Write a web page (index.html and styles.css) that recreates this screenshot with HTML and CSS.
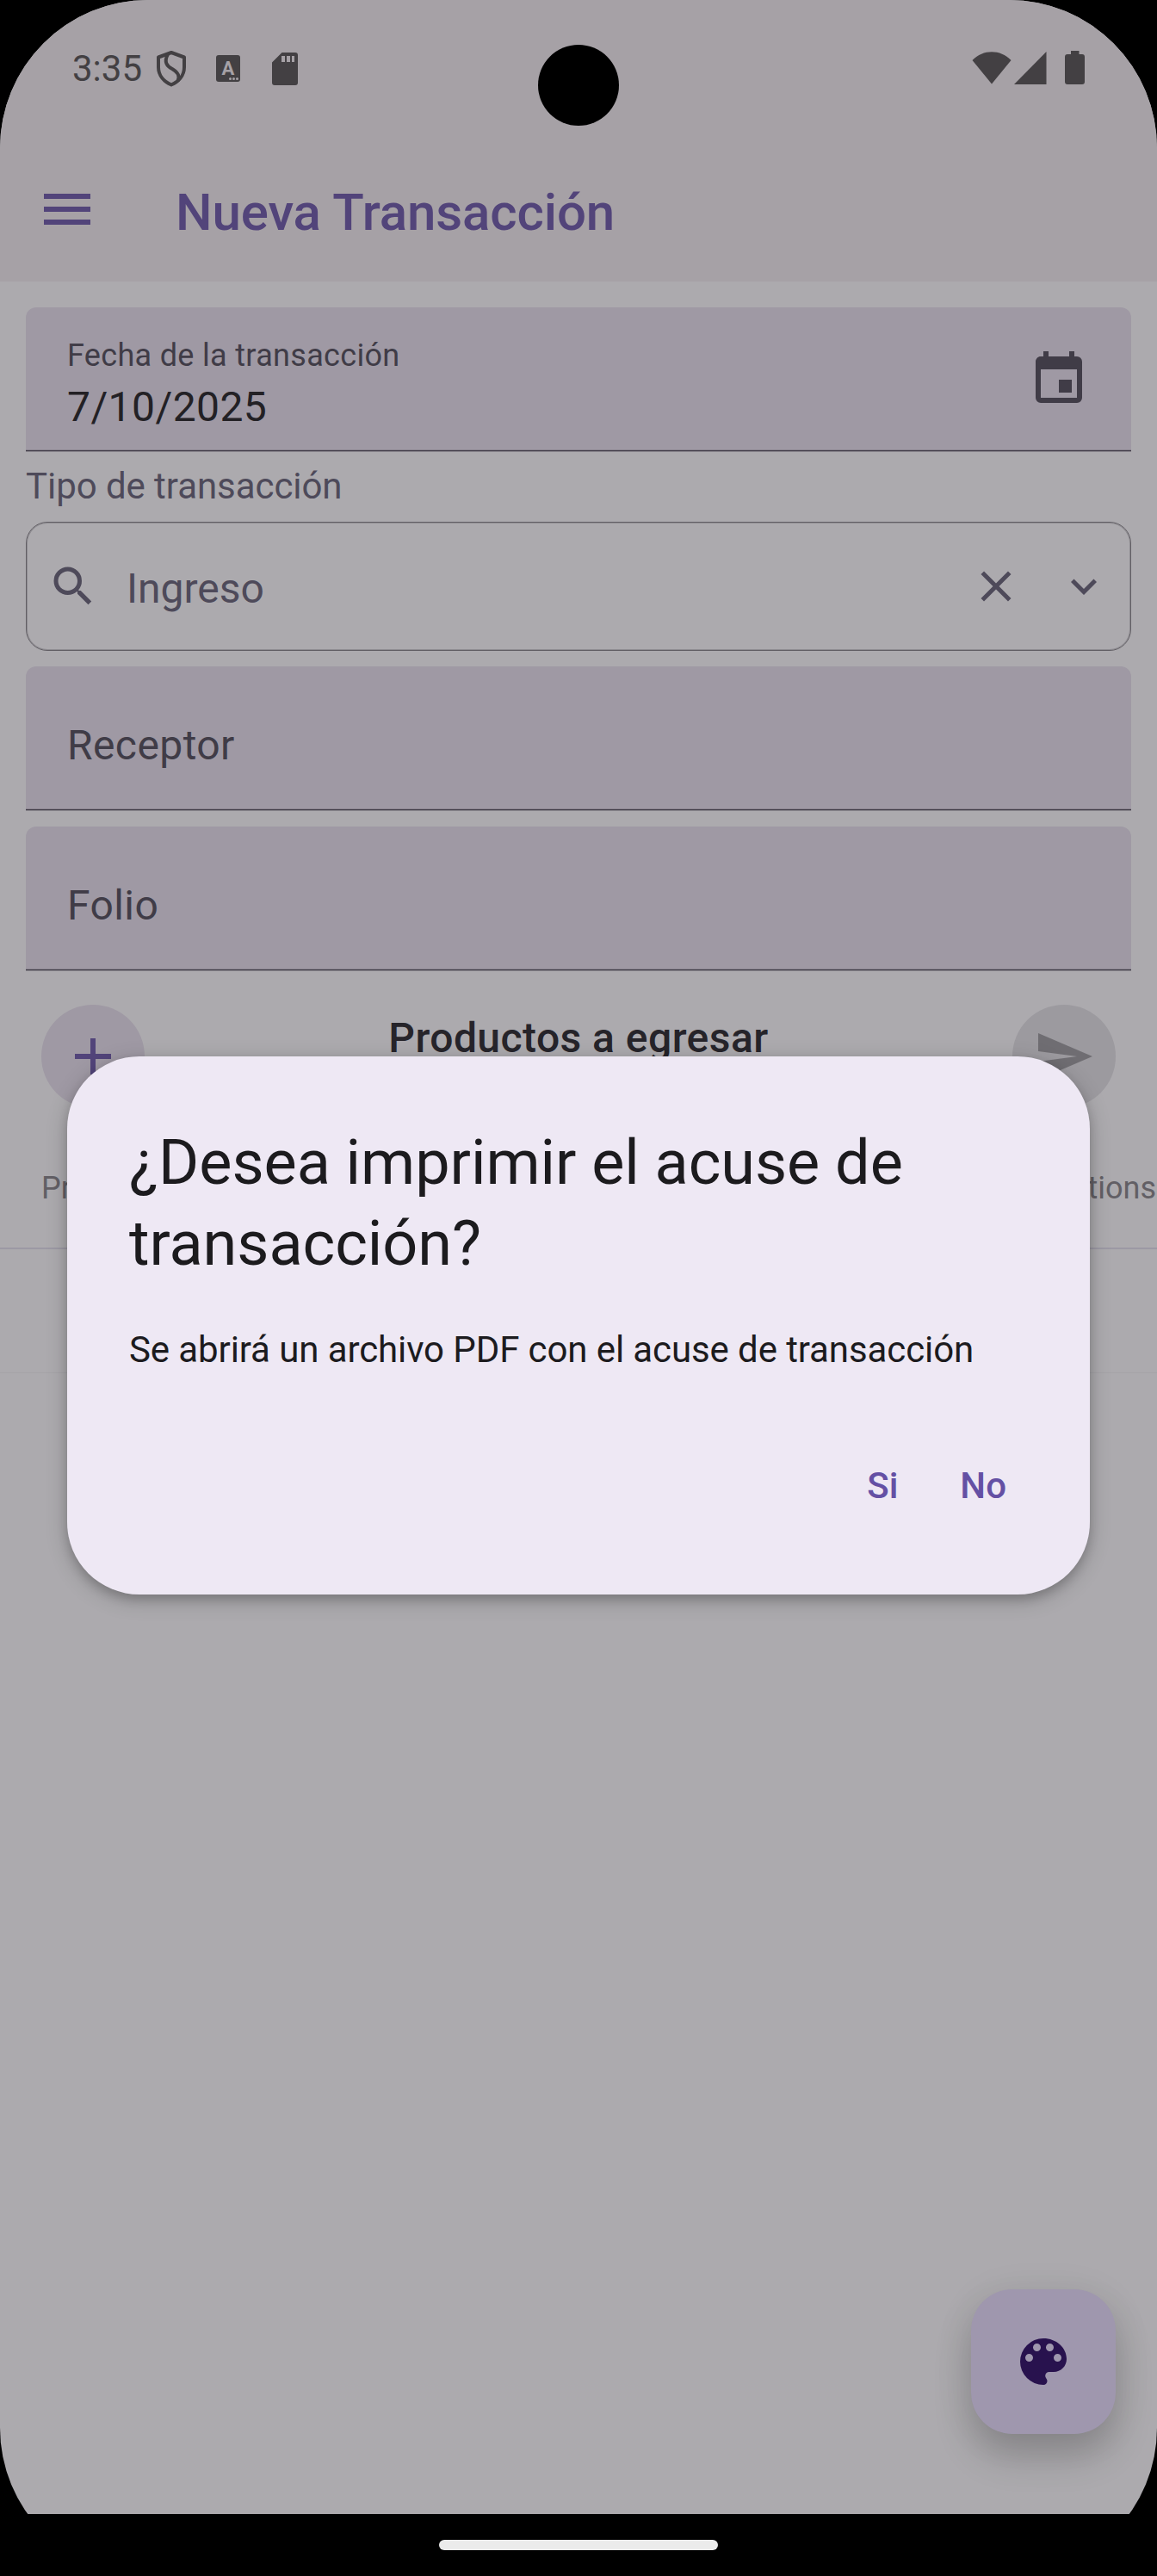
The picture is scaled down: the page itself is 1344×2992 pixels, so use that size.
FILE: index.html
```html
<!DOCTYPE html>
<html lang="es">
<head>
<meta charset="utf-8">
<title>Nueva Transacción</title>
<link rel="stylesheet" href="styles.css">
</head>
<body>
<div class="screen">
  <header class="top">
    <div class="status">
      <span class="clock">3:35</span>
      <svg class="shield" width="34" height="42" viewBox="0 0 34 42"><path d="M17 2 32 7.500V19C32 29 25 36 17 39.500C9 36 2 29 2 19V7.500Z" fill="none" stroke="currentColor" stroke-width="4" stroke-linejoin="round"/><path d="M13 4C8 13 12 18 18 21C25 25 27 29 24.500 35" fill="none" stroke="currentColor" stroke-width="4"/></svg>
      <span class="badge-a"><b>A</b><i></i><i></i><i></i></span>
      <svg class="sd" width="30" height="38" viewBox="0 0 30 38"><path fill-rule="evenodd" d="M11.500 0H27a3 3 0 0 1 3 3V35a3 3 0 0 1-3 3H3a3 3 0 0 1-3-3V11.500ZM11 4v7h4V4Zm6 0v7h4V4Zm6 0v7h3V4Z" fill="currentColor"/></svg>
      <span class="spacer"></span>
      <svg class="wifi" width="46" height="38" viewBox="0 0 46 38"><path d="M0.500 10C13-3 33-3 45.500 10L23 37.500Z" fill="currentColor"/></svg>
      <svg class="signal" width="38" height="38" viewBox="0 0 38 38"><path d="M37.500 0V38H0Z" fill="currentColor"/></svg>
      <svg class="battery" width="23" height="39" viewBox="0 0 23 39"><path d="M7 0H16.500V4H20a3 3 0 0 1 3 3V36a3 3 0 0 1-3 3H3a3 3 0 0 1-3-3V7a3 3 0 0 1 3-3H7Z" fill="currentColor"/></svg>
      <span class="camera"></span>
    </div>
    <div class="appbar">
      <svg width="72" height="72" viewBox="0 0 24 24"><path d="M3 6h18v2H3zM3 11h18v2H3zM3 16h18v2H3z" fill="currentColor"/></svg>
      <h1>Nueva Transacción</h1>
    </div>
  </header>

  <main class="form">
    <div class="field date">
      <div class="field-text">
        <span class="label">Fecha de la transacción</span>
        <span class="value">7/10/2025</span>
      </div>
      <svg width="72" height="72" viewBox="0 0 24 24"><path d="M19 19H5V8h14M16 1v2H8V1H6v2H5C3.890 3 3 3.890 3 5v14a2 2 0 0 0 2 2h14a2 2 0 0 0 2-2V5a2 2 0 0 0-2-2h-1V1M17 12h-5v5h5z" fill="currentColor"/></svg>
    </div>
    <div class="caption">Tipo de transacción</div>
    <div class="select">
      <svg width="60" height="60" viewBox="0 0 24 24"><path d="M15.500 14h-.79l-.28-.27A6.471 6.471 0 0 0 16 9.500 6.500 6.500 0 1 0 9.500 16c1.610 0 3.090-.59 4.230-1.570l.27.28v.79l5 4.990L20.490 19l-4.990-5zm-6 0C7.010 14 5 11.990 5 9.500S7.010 5 9.500 5 14 7.010 14 9.500 11.990 14 9.500 14z" fill="currentColor"/></svg>
      <span class="select-value">Ingreso</span>
      <svg width="60" height="60" viewBox="0 0 24 24"><path d="M19 6.410 17.590 5 12 10.590 6.410 5 5 6.410 10.590 12 5 17.590 6.410 19 12 13.410 17.590 19 19 17.590 13.410 12z" fill="currentColor"/></svg>
      <svg class="chevron" width="60" height="60" viewBox="0 0 24 24"><path d="M16.590 8.590 12 13.170 7.410 8.590 6 10l6 6 6-6z" fill="currentColor"/></svg>
    </div>
    <div class="field"><span class="placeholder">Receptor</span></div>
    <div class="field"><span class="placeholder">Folio</span></div>
  </main>

  <section class="products">
    <div class="actions">
      <span class="round add"><svg width="72" height="72" viewBox="0 0 24 24"><path d="M19 13h-6v6h-2v-6H5v-2h6V5h2v6h6z" fill="currentColor"/></svg></span>
      <h2>Productos a egresar</h2>
      <span class="round send"><svg width="72" height="72" viewBox="0 0 24 24"><path d="M2 21 23 12 2 3v7l15 2-15 2z" fill="currentColor"/></svg></span>
    </div>
    <div class="table-head"><span>Prod.</span><span>Actions</span></div>
    <div class="table-foot"></div>
  </section>

  <button class="fab" aria-label="Tema"><svg width="72" height="72" viewBox="0 0 24 24"><path d="M12 3a9 9 0 0 0 0 18c.83 0 1.500-.67 1.500-1.500 0-.39-.15-.74-.39-1.010-.23-.26-.38-.61-.38-.99 0-.83.67-1.500 1.500-1.500H16c2.760 0 5-2.240 5-5 0-4.420-4.030-8-9-8zm-5.500 9a1.500 1.500 0 1 1 0-3 1.500 1.500 0 0 1 0 3zm3-4a1.500 1.500 0 1 1 0-3 1.500 1.500 0 0 1 0 3zm5 0a1.500 1.500 0 1 1 0-3 1.500 1.500 0 0 1 0 3zm3 4a1.500 1.500 0 1 1 0-3 1.500 1.500 0 0 1 0 3z" fill="currentColor"/></svg></button>

  <div class="dialog" role="dialog">
    <h3>¿Desea imprimir el acuse de transacción?</h3>
    <p>Se abrirá un archivo PDF con el acuse de transacción</p>
    <div class="dialog-actions"><span>Si</span><span>No</span></div>
  </div>

  <footer class="nav"><span class="pill"></span></footer>
</div>
</body>
</html>
```
FILE: styles.css
```css
* { box-sizing: border-box; }
body { margin: 0; background: #000; font-family: Roboto, sans-serif; }
h1, h2, h3, p { margin: 0; }
svg { display: block; flex: none; }

.screen {
  position: relative;
  display: flex;
  flex-direction: column;
  width: 1344px;
  height: 2992px;
  overflow: hidden;
  border-radius: 172px;
  background: linear-gradient(#acaaae 2920px, #000 2920px);
}

/* Header */
.top { height: 327px; background: #a6a1a6; }
.status {
  position: relative;
  display: flex;
  align-items: flex-start;
  height: 147px;
  padding: 59px 84px 0;
  color: #434043;
}
.clock { width: 98px; margin-top: -4px; font-size: 42px; line-height: 49px; }
.badge-a {
  display: flex;
  position: relative;
  justify-content: center;
  width: 28px;
  height: 31px;
  margin: 5px 37px 0 35px;
  border-radius: 3px;
  background: #434043;
  color: #a6a1a6;
}
.badge-a b { font-size: 22px; line-height: 31px; }
.badge-a i { position: absolute; bottom: 2px; left: 15px; width: 3px; height: 3px; border-radius: 50%; background: #a6a1a6; }
.badge-a i:nth-of-type(2) { left: 19px; }
.badge-a i:nth-of-type(3) { left: 23px; }
.sd { margin-top: 2px; }
.spacer { flex: 1; }
.wifi, .signal { margin-top: 1px; }
.signal { margin-left: 3px; }
.battery { margin-left: 21px; }
.camera {
  position: absolute;
  top: 52px;
  left: 625px;
  width: 94px;
  height: 94px;
  border-radius: 50%;
  background: #000;
}
.appbar {
  display: flex;
  align-items: center;
  gap: 90px;
  height: 192px;
  padding-left: 42px;
  color: #52447a;
}
.appbar h1 { padding-top: 7px; font-size: 60px; font-weight: 500; line-height: 84px; letter-spacing: -0.1px; }

/* Form */
.form { display: flex; flex-direction: column; gap: 18px; padding: 30px 30px 0; }
.field {
  display: flex;
  align-items: center;
  height: 168px;
  padding: 0 48px;
  border-radius: 12px 12px 0 0;
  background: linear-gradient(#9f99a4 165px, #8b8590 165px 166px, #403c47 166px 167px, #86838a 167px);
  color: #403c47;
  letter-spacing: 0.42px;
}
.date { justify-content: space-between; }
.field-text { display: flex; flex-direction: column; padding-top: 16px; }
.label { font-size: 36px; line-height: 48px; letter-spacing: 0.32px; }
.value { font-size: 48px; line-height: 72px; color: #232125; }
.placeholder { padding-top: 16px; font-size: 48px; line-height: 56px; }
.caption { height: 63px; font-size: 42px; line-height: 43px; letter-spacing: -0.06px; color: #4e4a5a; }
.select {
  display: flex;
  align-items: center;
  height: 150px;
  margin-top: -18px;
  padding: 0 24px;
  border: 1px solid #615e64;
  border-radius: 25px;
  box-shadow: inset 0 0 0 1px #8d8b90;
  color: #4e4a5a;
}
.select-value { flex: 1; padding: 5px 0 0 32px; font-size: 48px; line-height: 60px; }
.chevron { margin-left: 42px; }

/* Products */
.products { padding-top: 39px; }
.actions { display: flex; justify-content: space-between; height: 120px; padding: 0 48px; }
.actions h2 { padding-top: 3px; font-size: 48px; font-weight: 500; line-height: 72px; letter-spacing: 0.45px; color: #26242a; }
.round { display: flex; align-items: center; justify-content: center; width: 120px; height: 120px; border-radius: 50%; }
.add { background: #9f99a4; color: #52447a; }
.send { background: #9c9a9f; color: #6f6d72; }
.table-head {
  display: flex;
  justify-content: space-between;
  height: 164px;
  padding: 69px 1px 0 48px;
  border-bottom: 2px solid #9c99a4;
  font-size: 36px;
  line-height: 48px;
  color: #625f65;
}
.table-foot { height: 144px; border-bottom: 1px solid #a5a3a8; }

/* Overlays */
.fab {
  position: absolute;
  right: 48px;
  top: 2659px;
  display: flex;
  align-items: center;
  justify-content: center;
  width: 168px;
  height: 168px;
  padding: 0;
  border: 0;
  border-radius: 48px;
  background: #9f97ae;
  color: #28124e;
  box-shadow: 0 26px 44px rgba(0, 0, 0, 0.19), 0 6px 48px rgba(0, 0, 0, 0.07);
}
.dialog {
  position: absolute;
  left: 78px;
  top: 1227px;
  width: 1188px;
  height: 625px;
  padding: 77px 72px 0;
  border-radius: 84px;
  background: #eee8f4;
  color: #1c1b1e;
  box-shadow: 0 6px 12px rgba(0, 0, 0, 0.16), 0 6px 26px rgba(0, 0, 0, 0.2);
}
.dialog h3 { font-size: 72px; font-weight: 400; line-height: 94px; letter-spacing: -0.04px; }
.dialog p { margin-top: 46px; font-size: 42px; line-height: 60px; letter-spacing: -0.1px; }
.dialog-actions {
  display: flex;
  justify-content: flex-end;
  gap: 72px;
  margin-top: 98px;
  padding-right: 25px;
  color: #6450a4;
  font-size: 42px;
  font-weight: 500;
  line-height: 60px;
}

/* System navigation */
.nav {
  display: flex;
  align-items: center;
  justify-content: center;
  height: 72px;
  margin-top: auto;
  background: #000;
}
.pill { width: 324px; height: 12px; border-radius: 6px; background: #ebebeb; }
```
